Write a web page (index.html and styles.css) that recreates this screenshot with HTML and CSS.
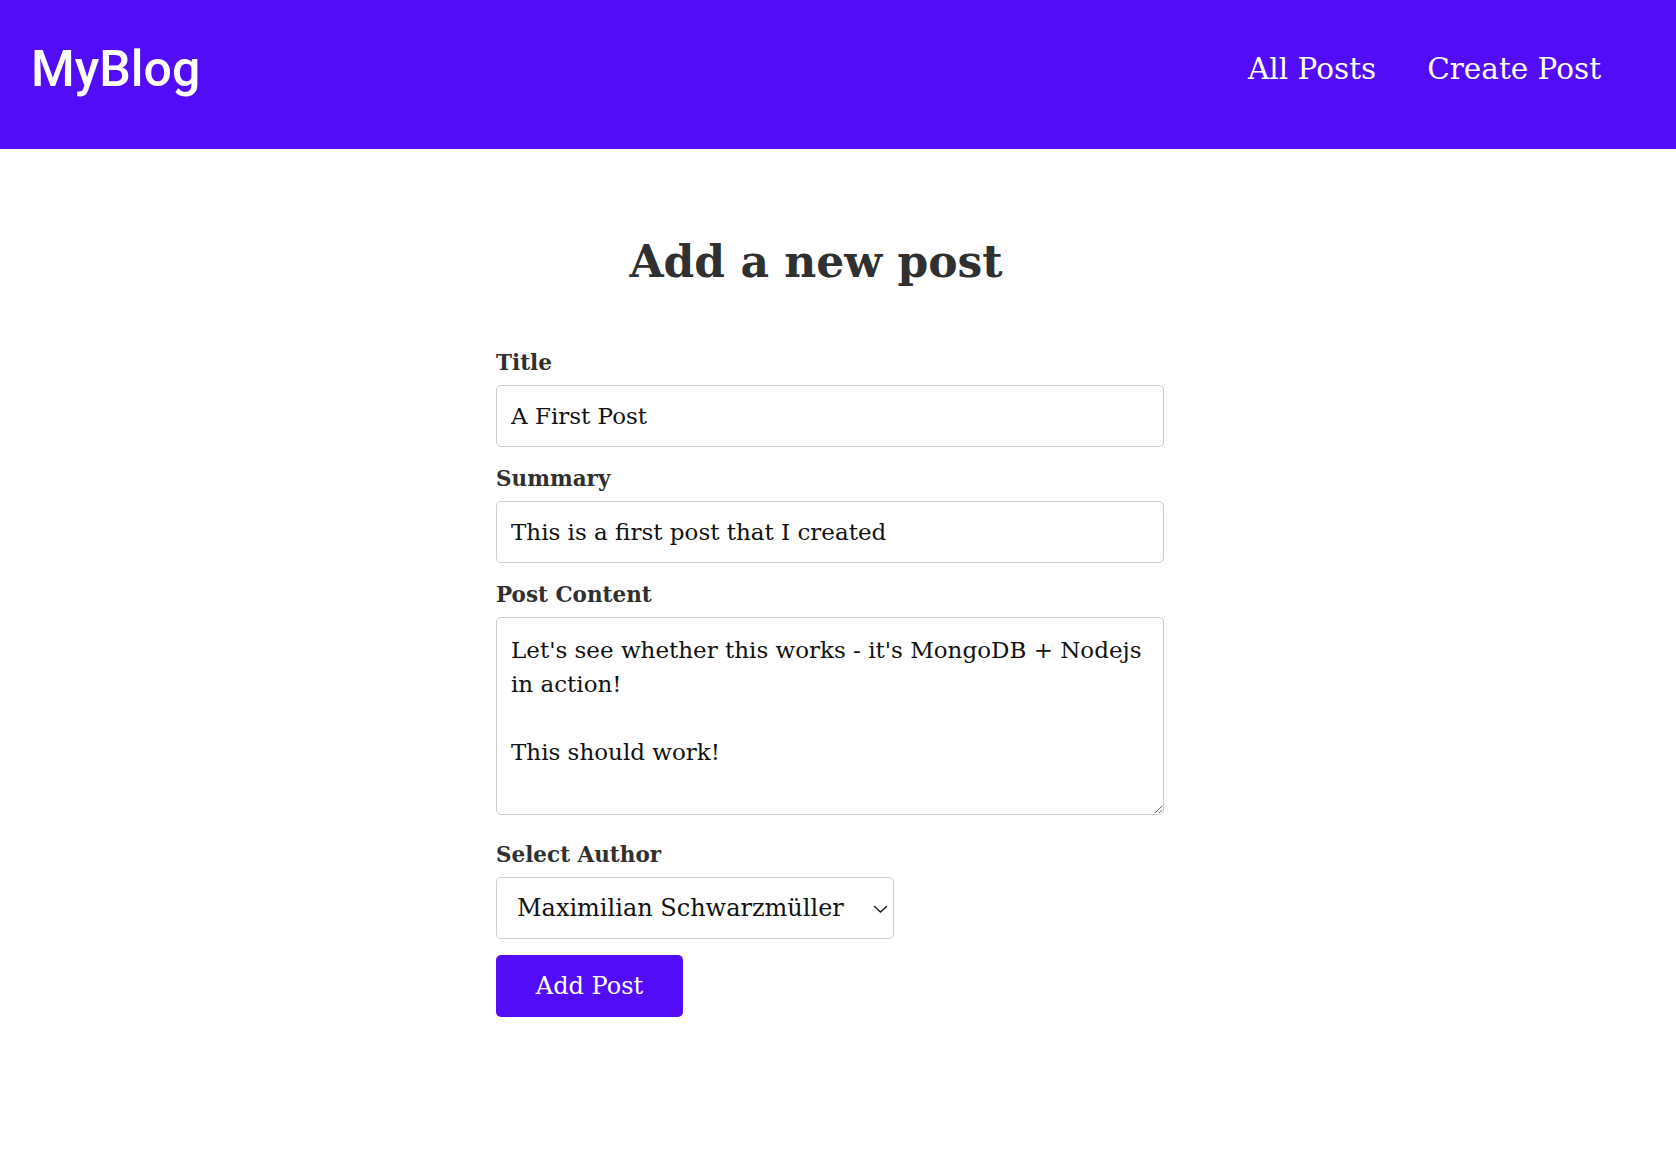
FILE: index.html
```html
<!DOCTYPE html>
<html lang="en">
<head>
  <meta charset="UTF-8">
  <title>MyBlog - Add a new post</title>
  <link rel="stylesheet" href="styles.css">
</head>
<body>

<header class="main-header">
  <div class="logo"><a href="#">MyBlog</a></div>
  <nav>
    <ul class="nav-links">
      <li><a href="#">All Posts</a></li>
      <li><a href="#">Create Post</a></li>
    </ul>
  </nav>
</header>

<main class="page">
  <h1>Add a new post</h1>

  <form class="post-form">
    <div class="form-control">
      <label for="title">Title</label>
      <input type="text" id="title" name="title" value="A First Post">
    </div>
    <div class="form-control">
      <label for="summary">Summary</label>
      <input type="text" id="summary" name="summary" value="This is a first post that I created">
    </div>
    <div class="form-control">
      <label for="content">Post Content</label>
      <textarea id="content" name="content">Let's see whether this works - it's MongoDB + Nodejs in action!

This should work!</textarea>
    </div>
    <div class="form-control author-control">
      <label for="author">Select Author</label>
      <div class="select-wrap">
        <select id="author" name="author">
          <option>Maximilian Schwarzmüller</option>
        </select>
        <svg class="chevron" viewBox="0 0 15 8">
          <path d="M1 1l6.5 6 6.5-6"/>
        </svg>
      </div>
    </div>
    <button class="btn">Add Post</button>
  </form>
</main>

</body>
</html>
```

FILE: styles.css
```css
* {
  box-sizing: border-box;
}

html {
  font-family: "DejaVu Serif", serif;
}

body {
  margin: 0;
  color: #303030;
}

.main-header {
  height: 149px;
  display: flex;
  align-items: center;
  justify-content: space-between;
  padding: 0 75px 12px 31px;
  background-color: #530cf8;
}

.logo a {
  font-family: Roboto, "Liberation Sans", sans-serif;
  font-size: 50px;
  font-weight: 500;
  color: white;
  text-decoration: none;
}

.nav-links {
  display: flex;
  gap: 51px;
  list-style: none;
  margin: 0;
  padding: 0;
}

.nav-links a {
  font-size: 29.5px;
  color: white;
  text-decoration: none;
}

.page {
  width: 684px;
  margin: 0 auto;
  padding-right: 16px;
}

h1 {
  margin: 83px 28px 55px 0;
  font-size: 44px;
  line-height: 60px;
  text-align: center;
}

.form-control {
  margin-bottom: 16px;
}

.form-control label {
  display: block;
  font-size: 21.5px;
  font-weight: bold;
  line-height: 32px;
  margin-bottom: 6px;
}

.form-control input,
.form-control textarea,
.form-control select {
  display: block;
  width: 100%;
  font: inherit;
  font-size: 23px;
  color: #111;
  border: 1px solid #cccccc;
  border-radius: 5px;
  background: white;
}

.form-control input {
  height: 62px;
  padding: 0 14px;
}

.form-control textarea {
  height: 198px;
  padding: 15px 14px;
  line-height: 34px;
  resize: vertical;
  margin-bottom: 24px;
}

.select-wrap {
  position: relative;
  width: 398px;
}

.form-control select {
  appearance: none;
  height: 62px;
  padding: 0 40px 0 20px;
  font-size: 24px;
}

.chevron {
  position: absolute;
  right: 6px;
  top: 28px;
  width: 15px;
  height: 8px;
  fill: none;
  stroke: #222;
  stroke-width: 1.5;
  pointer-events: none;
}

.btn {
  width: 187px;
  height: 62px;
  font: inherit;
  font-size: 24px;
  color: white;
  background-color: #530cf8;
  border: none;
  border-radius: 5px;
  cursor: pointer;
}
```
